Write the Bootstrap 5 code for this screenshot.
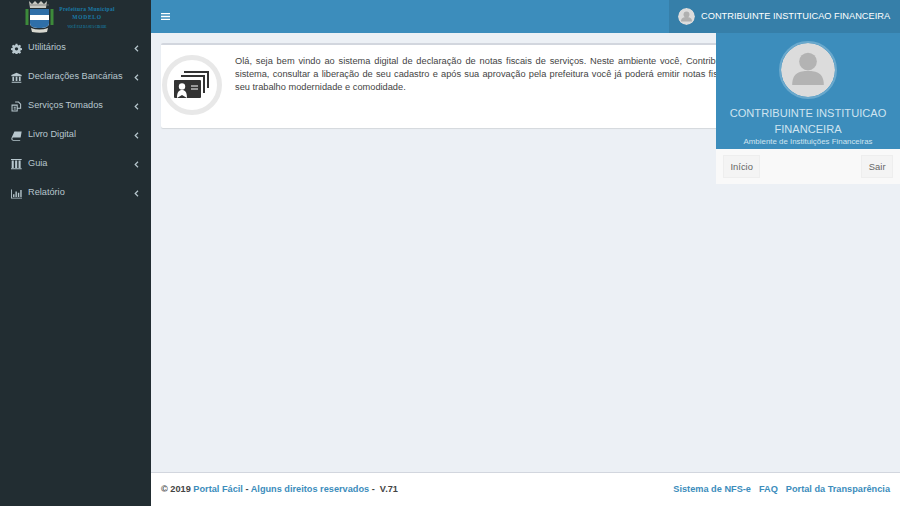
<!DOCTYPE html>
<html lang="pt-BR">
<head>
<meta charset="utf-8">
<title>Portal Fácil</title>
<link href="https://cdn.jsdelivr.net/npm/bootstrap@5.3.0/dist/css/bootstrap.min.css" rel="stylesheet">
<style>
html,body{height:100%;overflow:hidden}
body{font-family:"Liberation Sans",Arial,sans-serif;background:#ecf0f5;color:#333;font-size:10px}
.shell{height:506px;width:900px}
.side{width:151px;background:#222d32;flex:none}
.brandbox{height:33px;overflow:hidden;padding-left:24px;gap:3px}
.brandtxt{color:#1a7ba8;font-family:"Liberation Serif",serif;font-weight:700;text-align:center;line-height:1;width:58px;white-space:nowrap}
.brandtxt .t1{font-size:5.5px;display:block;letter-spacing:.3px;margin-top:2px}
.brandtxt .t2{font-size:5.5px;display:block;margin-top:3px;letter-spacing:.7px}
.brandtxt .t3{font-size:3px;display:block;margin-top:5px;color:#177a9f}
.sidenav{padding-top:.5px}
.menuitem{height:29px;color:#b8c7ce;font-size:9.2px;padding-left:11px;padding-right:12px;text-decoration:none;white-space:nowrap}
.menuitem svg.ico{width:11px;height:11px;margin-right:6px;flex:none}
.chev{width:5px;height:7px;flex:none;margin-left:auto}
.topbar{height:33px;background:#3c8dbc;flex:none}
.burger{width:9px;height:7px;margin-left:10px;flex:none}
.usertab{height:33px;width:231px;background:#367fa9;color:#fff;font-size:9.25px;padding-left:9px;gap:6px;white-space:nowrap}
.avasm{width:17px;height:17px;border-radius:50%;flex:none}
.mainarea{min-width:0;position:relative}
.contentarea{padding:10px 10px 0;min-height:0}
.welcome{background:#fff;border-top:2px solid #d2d6de;border-radius:2px;height:85px;box-shadow:0 1px 1px rgba(0,0,0,.1);padding:8px 0 0 0}
.ring{width:60px;height:60px;border:5px solid #e8e8e8;border-radius:50%;background:#fff;margin:2px 13px 0 1px;flex:none}
.wtxt{font-size:9.25px;line-height:13px;color:#444;margin:2px 36px 0 0;flex:1 1 0;min-width:0}
.wline{display:block;white-space:normal;text-align:justify;text-align-last:justify}
.wlast{display:block}
.footbar{height:34px;background:#fff;border-top:1px solid #d2d6de;padding:1px 10px 0;font-size:9.2px;font-weight:700;color:#444;flex:none}
.footbar a{color:#3c8dbc;text-decoration:none}
.footlinks{gap:8px}
.usermenu{position:absolute;top:33px;right:0;width:184px;background:#f9f9f9;z-index:5}
.userhead{background:#3c8dbc;height:116px;text-align:center;color:#cfe4f0;padding-top:8px}
.avalg{width:58px;height:58px;border-radius:50%;border:2px solid #6aa9cd;display:block;margin:0 auto 6px}
.uname{font-size:11.1px;line-height:16px}
.usub{font-size:7.9px;line-height:11px;margin-top:-1px}
.userfoot{padding:6px 7px 6px 7px;height:35px}
.ubtn{background:#f4f4f4;border:1px solid #eee;color:#666;font-size:9.4px;height:23px;padding:0 6.5px;border-radius:0;line-height:21px}
</style>
</head>
<body>
<div class="shell d-flex">
  <aside class="side d-flex flex-column">
    <div class="brandbox d-flex align-items-center">
      <svg width="31" height="33" viewBox="0 0 31 33">
        <path d="M5 1l3 3 3-3 3 3 3-3 3 3 3-3-1 7H6z" fill="#c9c9c2"/><path d="M6 5h19" stroke="#777" stroke-width=".8"/>
        <path d="M3 9v16M28 9v16" stroke="#3d8a3a" stroke-width="3"/>
        <path d="M6 9h19v14c0 4-4 5-9.500 5S6 27 6 23z" fill="#fff"/>
        <path d="M6 9h19v6H6z" fill="#2f6fa8"/><path d="M6 20h19v3c0 4-4 5-9.500 5S6 27 6 23z" fill="#2f6fa8"/>
        <path d="M7 28q8 3 17 0l-1 4q-7 1.500-15 0z" fill="#d8d8d0"/>
      </svg>
      <div class="brandtxt"><span class="t1">Prefeitura Municipal</span><span class="t2">MODELO</span><span class="t3">VOCÊ FAZ DA SUA CIDADE</span></div>
    </div>
    <nav class="sidenav d-flex flex-column">
      <a class="menuitem d-flex align-items-center" href="#"><svg class="ico" viewBox="0 0 16 16"><path fill="#b8c7ce" d="M6.700 1h2.600l.4 2 1.400.6 1.700-1.100 1.800 1.800-1.100 1.700.6 1.400 2 .4v2.400l-2 .4-.6 1.400 1.100 1.700-1.800 1.800-1.700-1.100-1.400.6-.4 2H6.700l-.4-2-1.400-.6-1.700 1.100-1.800-1.800 1.100-1.700-.6-1.400-2-.4V7.800l2-.4.6-1.400-1.100-1.700 1.800-1.800 1.700 1.100 1.400-.6z"/><circle cx="8" cy="8.500" r="2.400" fill="#222d32"/></svg>Utilitários<svg class="chev" viewBox="0 0 5 7"><path d="M4 .8 1.200 3.500 4 6.200" fill="none" stroke="#b8c7ce" stroke-width="1.200"/></svg></a>
      <a class="menuitem d-flex align-items-center" href="#"><svg class="ico" viewBox="0 0 16 16"><path fill="#b8c7ce" d="M8 1 15.500 4.500V6H.5V4.500zM2 7h2.500v6H2zM6.800 7h2.500v6H6.800zM11.500 7H14v6h-2.500zM1 14h14v1.500H1z"/></svg>Declarações Bancárias<svg class="chev" viewBox="0 0 5 7"><path d="M4 .8 1.200 3.500 4 6.200" fill="none" stroke="#b8c7ce" stroke-width="1.200"/></svg></a>
      <a class="menuitem d-flex align-items-center" href="#"><svg class="ico" viewBox="0 0 16 16"><path fill="none" stroke="#b8c7ce" stroke-width="1.500" d="M6 1.500h5l3 3v6H9.500M1.500 6h7.500v8.500H1.500zM4 9h3M4 11.500h3"/></svg>Serviços Tomados<svg class="chev" viewBox="0 0 5 7"><path d="M4 .8 1.200 3.500 4 6.200" fill="none" stroke="#b8c7ce" stroke-width="1.200"/></svg></a>
      <a class="menuitem d-flex align-items-center" href="#"><svg class="ico" viewBox="0 0 16 16"><path fill="#b8c7ce" d="M5 2h10.500l-1.500 9H3.500q-2 0-1.500 2t2 1.500h9.500l-.3 1H3Q0 15 .5 12z"/></svg>Livro Digital<svg class="chev" viewBox="0 0 5 7"><path d="M4 .8 1.200 3.500 4 6.200" fill="none" stroke="#b8c7ce" stroke-width="1.200"/></svg></a>
      <a class="menuitem d-flex align-items-center" href="#"><svg class="ico" viewBox="0 0 16 16"><path fill="#b8c7ce" d="M0 0h15.500v1.500H0zM1 2h3v11H1zM6 2h3v11H6zM11 2h3v11h-3zM0 13.500h15.500V15H0z"/></svg>Guia<svg class="chev" viewBox="0 0 5 7"><path d="M4 .8 1.200 3.500 4 6.200" fill="none" stroke="#b8c7ce" stroke-width="1.200"/></svg></a>
      <a class="menuitem d-flex align-items-center" href="#"><svg class="ico" viewBox="0 0 16 16"><path fill="#b8c7ce" d="M0 2h1.300v12H16v1.300H0zM3 9h2v4H3zM6.500 5h2v8h-2zM10 7h2v6h-2zM13.500 3h2v10h-2z"/></svg>Relatório<svg class="chev" viewBox="0 0 5 7"><path d="M4 .8 1.200 3.500 4 6.200" fill="none" stroke="#b8c7ce" stroke-width="1.200"/></svg></a>
    </nav>
  </aside>
  <div class="mainarea flex-grow-1 d-flex flex-column">
    <header class="topbar d-flex align-items-center justify-content-between">
      <svg class="burger" viewBox="0 0 9 7"><path d="M0 .5h9M0 3.500h9M0 6.500h9" stroke="#fff" stroke-width="1.300"/></svg>
      <div class="usertab d-flex align-items-center">
        <svg class="avasm" viewBox="0 0 40 40"><circle cx="20" cy="20" r="20" fill="#dcdcdc"/><circle cx="20" cy="15" r="7" fill="#b0b0b0"/><path d="M7 32c0-9 6-11 13-11s13 2 13 11z" fill="#b0b0b0"/></svg>
        CONTRIBUINTE INSTITUICAO FINANCEIRA
      </div>
    </header>
    <main class="contentarea flex-grow-1">
      <div class="welcome d-flex">
        <div class="ring d-flex align-items-center justify-content-center">
          <svg width="36" height="30" viewBox="0 0 36 30"><path d="M10 1h25v17h-2V3H10zM7 5h24v18h-2V7H7z" fill="#333"/><rect x="0" y="10" width="27" height="18" rx="1" fill="#333"/><circle cx="8" cy="16.500" r="3.200" fill="#fff"/><path d="M3 28c0-6 2-8 5-8s5 2 5 8l-5-3z" fill="#fff"/><path d="M17 16h7M17 19h7" stroke="#fff"/></svg>
        </div>
        <p class="wtxt"><span class="wline">Olá, seja bem vindo ao sistema digital de declaração de notas fiscais de serviços. Neste ambiente você, Contribuinte, poderá acompanhar o seu</span><span class="wline">sistema, consultar a liberação de seu cadastro e após sua aprovação pela prefeitura você já poderá emitir notas fiscais eletrônicas, trazendo para o</span><span class="wlast">seu trabalho modernidade e comodidade.</span></p>
      </div>
    </main>
    <footer class="footbar d-flex align-items-center justify-content-between">
      <div>© 2019 <a href="#">Portal Fácil</a> - <a href="#">Alguns direitos reservados</a> - &nbsp;V.71</div>
      <div class="footlinks d-flex"><a href="#">Sistema de NFS-e</a><a href="#">FAQ</a><a href="#">Portal da Transparência</a></div>
    </footer>
    <div class="usermenu">
      <div class="userhead">
        <svg class="avalg" viewBox="0 0 58 58"><circle cx="29" cy="29" r="29" fill="#dcdcdc"/><circle cx="29" cy="20" r="9.500" fill="#b3b3b3"/><path d="M12 45c0-13 8-15 17-15s17 2 17 15z" fill="#b3b3b3"/></svg>
        <div class="uname">CONTRIBUINTE INSTITUICAO FINANCEIRA</div>
        <div class="usub">Ambiente de Instituições Financeiras</div>
      </div>
      <div class="userfoot d-flex justify-content-between">
        <a class="ubtn btn" href="#">Início</a>
        <a class="ubtn btn" href="#">Sair</a>
      </div>
    </div>
  </div>
</div>
<script src="https://cdn.jsdelivr.net/npm/bootstrap@5.3.0/dist/js/bootstrap.bundle.min.js"></script>
</body>
</html>
